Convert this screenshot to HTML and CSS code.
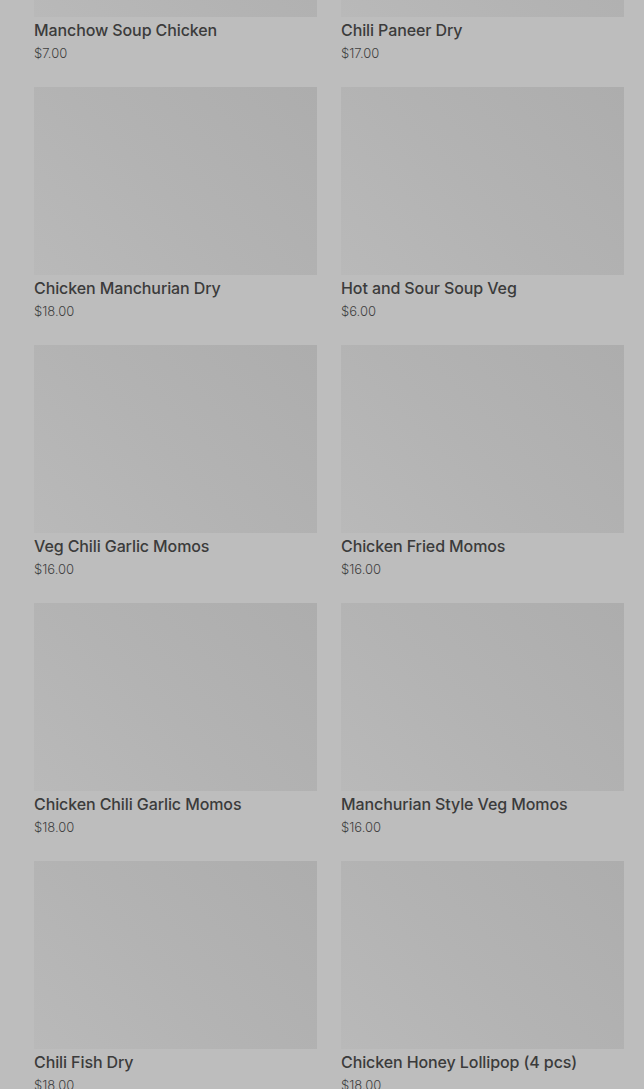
FILE: index.html
```html
<!DOCTYPE html>
<html lang="en">
<head>
<meta charset="utf-8">
<title>Menu</title>
<link rel="stylesheet" href="styles.css">
</head>
<body>
<main class="grid">
  <div class="item"><div class="thumb"></div><div class="name">Manchow Soup Chicken</div><div class="price">$7.00</div></div>
  <div class="item"><div class="thumb"></div><div class="name">Chili Paneer Dry</div><div class="price">$17.00</div></div>
  <div class="item"><div class="thumb"></div><div class="name">Chicken Manchurian Dry</div><div class="price">$18.00</div></div>
  <div class="item"><div class="thumb"></div><div class="name">Hot and Sour Soup Veg</div><div class="price">$6.00</div></div>
  <div class="item"><div class="thumb"></div><div class="name">Veg Chili Garlic Momos</div><div class="price">$16.00</div></div>
  <div class="item"><div class="thumb"></div><div class="name">Chicken Fried Momos</div><div class="price">$16.00</div></div>
  <div class="item"><div class="thumb"></div><div class="name">Chicken Chili Garlic Momos</div><div class="price">$18.00</div></div>
  <div class="item"><div class="thumb"></div><div class="name">Manchurian Style Veg Momos</div><div class="price">$16.00</div></div>
  <div class="item"><div class="thumb"></div><div class="name">Chili Fish Dry</div><div class="price">$18.00</div></div>
  <div class="item"><div class="thumb"></div><div class="name">Chicken Honey Lollipop (4 pcs)</div><div class="price">$18.00</div></div>
</main>
</body>
</html>
```
FILE: styles.css
```css
html, body {
  margin: 0;
  padding: 0;
  background: #bdbdbd;
  overflow: hidden;
  height: 1089px;
}
body {
  font-family: Inter, "Noto Sans", sans-serif;
  color: #3b3b3b;
}
.grid {
  display: grid;
  grid-template-columns: 283px 283px;
  column-gap: 24px;
  row-gap: 24px;
  padding: 0 20px 0 34px;
  margin-top: -171px;
}
.thumb {
  height: 188px;
  background: linear-gradient(45deg, #b9b9b9 0%, #b3b3b3 45%, #adadad 100%);
}
.name {
  margin-top: 3px;
  font-size: 16px;
  font-weight: 500;
  line-height: 20px;
  letter-spacing: -0.1px;
}
.price {
  margin-top: 3px;
  font-size: 13px;
  font-weight: 300;
  line-height: 20px;
  color: #3f3f3f;
}
```
